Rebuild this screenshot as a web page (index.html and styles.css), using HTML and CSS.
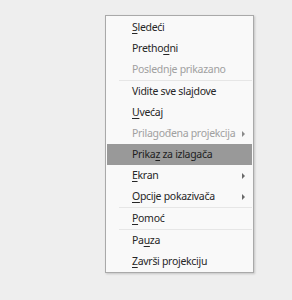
FILE: index.html
```html
<!DOCTYPE html>
<html>

<head>
    <meta charset="UTF-8">
    <title>Prikaz slajdova</title>
    <link rel="stylesheet" href="styles.css">
</head>

<body>
    <div class="menu">
        <div class="item"><u>S</u>ledeći</div>
        <div class="item">Pretho<u>d</u>ni</div>
        <div class="item off">Poslednje prikazano</div>
        <div class="sep"></div>
        <div class="item">Vidite sve sla<u>j</u>dove</div>
        <div class="item"><u>U</u>većaj</div>
        <div class="item off">Prilagođena projekcija<span class="arrow"></span></div>
        <div class="item active">Prika<u>z</u> za izlagača</div>
        <div class="item"><u>E</u>kran<span class="arrow"></span></div>
        <div class="item"><u>O</u>pcije pokazivača<span class="arrow"></span></div>
        <div class="sep"></div>
        <div class="item"><u>P</u>omoć</div>
        <div class="sep"></div>
        <div class="item">Pa<u>u</u>za</div>
        <div class="item"><u>Z</u>avrši projekciju</div>
    </div>
</body>

</html>
```

FILE: styles.css
```css
body {
    margin: 0;
    padding: 15px 0 0 105px;
    height: 285px;
    background: #eeeeee;
    font-family: "Noto Sans", sans-serif;
    font-size: 10.5px;
    letter-spacing: -0.3px;
}

.menu {
    width: 145px;
    padding: 1px 1px 0 1px;
    background: #f9f9f9;
    border: 1px solid #a9a9a9;
    box-shadow: 1px 1px 2px rgba(0, 0, 0, 0.18);
}

.item {
    position: relative;
    height: 21px;
    line-height: 21px;
    padding-left: 25px;
    color: #262626;
    white-space: nowrap;
}

.item u {
    text-decoration-thickness: 1px;
    text-underline-offset: 2px;
}

.off {
    color: #a0a0a0;
}

.active {
    background: #999999;
    color: #1e1e1e;
}

.arrow {
    position: absolute;
    right: 7px;
    top: 8px;
    width: 0;
    height: 0;
    border-top: 3px solid transparent;
    border-bottom: 3px solid transparent;
    border-left: 3px solid #6a6a6a;
}

.off .arrow {
    border-left-color: #8a8a8a;
}

.sep {
    height: 1px;
    margin-left: 12px;
    background: #e6e6e6;
}
```
